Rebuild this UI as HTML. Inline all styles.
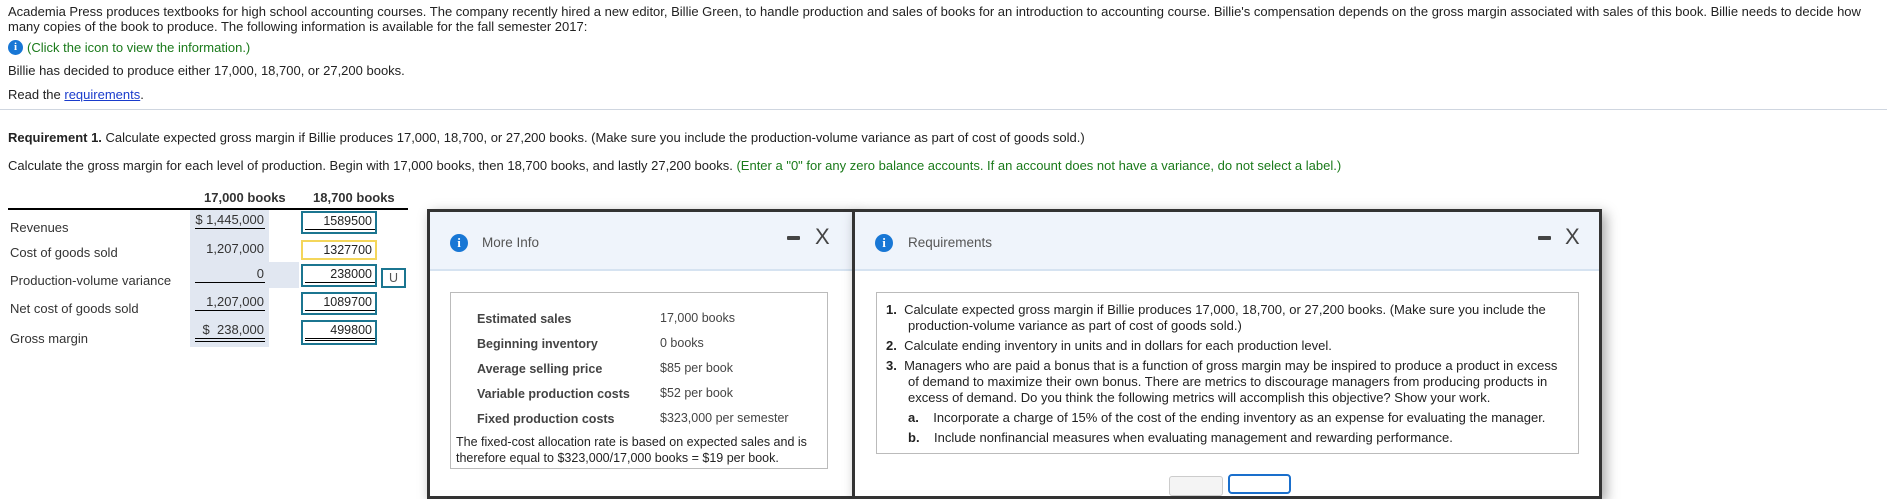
<!DOCTYPE html>
<html><head><meta charset="utf-8"><style>
*{margin:0;padding:0;box-sizing:border-box}
body{width:1887px;height:483px;overflow:hidden;background:#fff;font-family:"Liberation Sans",Arial,sans-serif;font-size:13px;color:#222;position:relative}
.a{position:absolute;white-space:nowrap}
.g{color:#1a7a1a}
.lbl{color:#333}
.bl{background:#e1e7f1}
.inp{position:absolute;border:2px solid #1b7590;background:#fff;text-align:right;padding-right:3px;font-size:12.5px;height:23px;line-height:16px}
.ul{position:absolute;border-bottom:1px solid #000}
.dlg{position:absolute;top:209px;height:290px;background:#fff;border:3px solid #333;box-shadow:4px 4px 12px rgba(0,0,0,.35)}
.hd{position:absolute;left:0;right:0;top:0;height:59px;background:#eff4fb;border-bottom:2px solid #d6e3f1}
.ic{position:absolute;width:18px;height:18px;border-radius:50%;background:#1877d5;color:#fff;font:bold 13px "Liberation Serif",serif;text-align:center;line-height:18px}
.box{position:absolute;border:1px solid #bbb}
</style></head><body>
<div class="a" style="left:8px;top:4px;line-height:15px;font-size:13px">Academia Press produces textbooks for high school accounting courses. The company recently hired a new editor, Billie Green, to handle production and sales of books for an introduction to accounting course. Billie's compensation depends on the gross margin associated with sales of this book. Billie needs to decide how<br>many copies of the book to produce. The following information is available for the fall semester 2017:</div>
<div class="ic" style="left:8px;top:40px;width:15px;height:15px;line-height:15px;font-size:11px">i</div>
<div class="a g" style="left:27px;top:40px">(Click the icon to view the information.)</div>
<div class="a" style="left:8px;top:63px">Billie has decided to produce either 17,000, 18,700, or 27,200 books.</div>
<div class="a" style="left:8px;top:87px">Read the <span style="color:#1a3ccc;text-decoration:underline">requirements</span>.</div>
<div class="a" style="left:0;top:109px;width:1887px;height:1px;background:#cfd6e0"></div>
<div class="a" style="left:8px;top:130px"><b>Requirement 1.</b> Calculate expected gross margin if Billie produces 17,000, 18,700, or 27,200 books. (Make sure you include the production-volume variance as part of cost of goods sold.)</div>
<div class="a" style="left:8px;top:158px">Calculate the gross margin for each level of production. Begin with 17,000 books, then 18,700 books, and lastly 27,200 books. <span class="g">(Enter a "0" for any zero balance accounts. If an account does not have a variance, do not select a label.)</span></div>
<div class="a" style="left:204px;top:190px;font-weight:bold;color:#333">17,000 books</div>
<div class="a" style="left:313px;top:190px;font-weight:bold;color:#333">18,700 books</div>
<div class="a" style="left:8px;top:208px;width:400px;height:2px;background:#000"></div>
<div class="a bl" style="left:190px;top:210px;width:79px;height:137px"></div>
<div class="a bl" style="left:269px;top:262px;width:30px;height:26px"></div>
<div class="a lbl" style="left:10px;top:220px">Revenues</div>
<div class="a lbl" style="left:10px;top:245px">Cost of goods sold</div>
<div class="a lbl" style="left:10px;top:273px">Production-volume variance</div>
<div class="a lbl" style="left:10px;top:301px">Net cost of goods sold</div>
<div class="a lbl" style="left:10px;top:331px">Gross margin</div>
<div class="a lbl" style="left:192px;top:212px;width:72px;text-align:right">$ 1,445,000</div><div class="ul" style="left:195px;top:228px;width:70px"></div>
<div class="a lbl" style="left:196px;top:241px;width:68px;text-align:right">1,207,000</div>
<div class="a lbl" style="left:196px;top:266px;width:68px;text-align:right">0</div><div class="ul" style="left:195px;top:282px;width:70px"></div>
<div class="a lbl" style="left:196px;top:294px;width:68px;text-align:right">1,207,000</div><div class="ul" style="left:195px;top:310px;width:70px"></div>
<div class="a lbl" style="left:196px;top:322px;width:68px;text-align:right">$&nbsp;&nbsp;238,000</div><div class="ul" style="left:195px;top:338px;width:70px;height:4px;border-top:1px solid #000"></div>
<div class="inp" style="left:301px;top:211px;width:76px">1589500<div style="border-bottom:1px solid #000;margin-right:-3px;margin-left:2px"></div></div>
<div class="inp" style="left:301px;top:240px;width:76px;border-color:#f4d65a;height:20px">1327700</div>
<div class="inp" style="left:301px;top:264px;width:76px">238000<div style="border-bottom:1px solid #000;margin-right:-3px;margin-left:2px"></div></div>
<div class="inp" style="left:381px;top:268px;width:25px;height:20px;text-align:center;padding:0;color:#555;line-height:16px">U</div>
<div class="inp" style="left:301px;top:292px;width:76px">1089700<div style="border-bottom:1px solid #000;margin-right:-3px;margin-left:2px"></div></div>
<div class="inp" style="left:301px;top:320px;width:76px;height:25px">499800<div style="border-bottom:1px solid #000;border-top:1px solid #000;height:3px;margin-right:-3px;margin-left:2px"></div></div>

<div class="dlg" style="left:427px;width:428px">
 <div class="hd"></div>
 <div class="ic" style="left:20px;top:22px">i</div>
 <div class="a" style="left:52px;top:23px;font-size:13.5px;color:#555">More Info</div>
 <div class="a" style="left:357px;top:24px;width:13px;height:4px;background:#444;border-radius:1px"></div>
 <div class="a" style="left:385px;top:12px;font-size:22px;color:#444;font-weight:300">X</div>
 <div class="box" style="left:20px;top:80px;width:378px;height:177px"></div>
 <div class="a" style="left:47px;top:95px;line-height:25px;font-weight:bold;color:#444;font-size:12.5px">Estimated sales<br>Beginning inventory<br>Average selling price<br>Variable production costs<br>Fixed production costs</div>
 <div class="a" style="left:230px;top:94px;line-height:25px;color:#444;font-size:12.5px">17,000 books<br>0 books<br>$85 per book<br>$52 per book<br>$323,000 per semester</div>
 <div class="a" style="left:26px;top:222px;line-height:16px;font-size:12.5px">The fixed-cost allocation rate is based on expected sales and is<br>therefore equal to $323,000/17,000 books = $19 per book.</div>
</div>

<div class="dlg" style="left:852px;width:750px">
 <div class="hd"></div>
 <div class="ic" style="left:20px;top:22px">i</div>
 <div class="a" style="left:53px;top:23px;font-size:13.5px;color:#555">Requirements</div>
 <div class="a" style="left:683px;top:24px;width:13px;height:4px;background:#444;border-radius:1px"></div>
 <div class="a" style="left:710px;top:12px;font-size:22px;color:#444">X</div>
 <div class="box" style="left:21px;top:80px;width:703px;height:162px"></div>
 <div class="a" style="left:31px;top:90px;line-height:16px;font-size:13px">
  <div><b>1.</b>&nbsp;&nbsp;Calculate expected gross margin if Billie produces 17,000, 18,700, or 27,200 books. (Make sure you include the<br><span style="padding-left:22px">production-volume variance as part of cost of goods sold.)</span></div>
  <div style="margin-top:4px"><b>2.</b>&nbsp;&nbsp;Calculate ending inventory in units and in dollars for each production level.</div>
  <div style="margin-top:4px"><b>3.</b>&nbsp;&nbsp;Managers who are paid a bonus that is a function of gross margin may be inspired to produce a product in excess<br><span style="padding-left:22px">of demand to maximize their own bonus. There are metrics to discourage managers from producing products in</span><br><span style="padding-left:22px">excess of demand. Do you think the following metrics will accomplish this objective? Show your work.</span></div>
  <div style="margin-top:4px;padding-left:22px"><b>a.</b>&nbsp;&nbsp;&nbsp;&nbsp;Incorporate a charge of 15% of the cost of the ending inventory as an expense for evaluating the manager.</div>
  <div style="margin-top:4px;padding-left:22px"><b>b.</b>&nbsp;&nbsp;&nbsp;&nbsp;Include nonfinancial measures when evaluating management and rewarding performance.</div>
 </div>
 <div class="a" style="left:314px;top:264px;width:54px;height:20px;border:1px solid #ccc;border-radius:3px;background:#f4f4f4"></div>
 <div class="a" style="left:373px;top:262px;width:63px;height:20px;border:2px solid #1a6fcc;border-radius:4px;background:#fff"></div>
</div>
</body></html>
